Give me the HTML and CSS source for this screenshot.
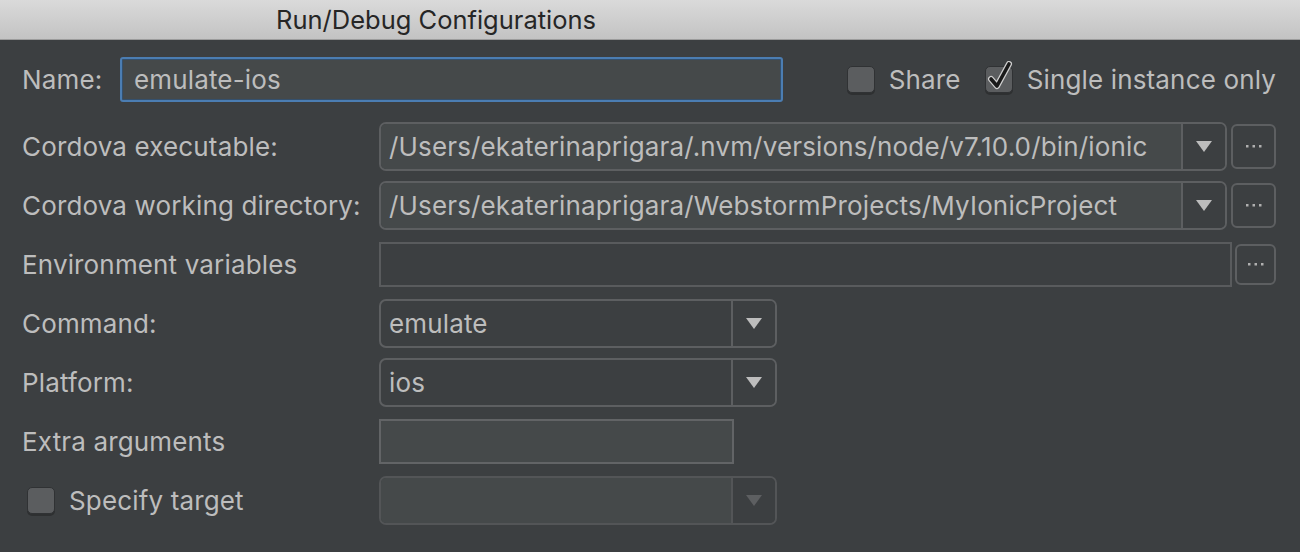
FILE: index.html
```html
<!DOCTYPE html>
<html>
<head>
<meta charset="utf-8">
<link rel="stylesheet" href="styles.css">
</head>
<body>
<div class="window">
  <div class="titlebar"><span class="title">Run/Debug Configurations</span></div>
  <div class="content">
    <div class="name-row">
      <span class="name-label">Name:</span>
      <div class="name-field">emulate-ios</div>
      <div class="checks">
        <div class="check"><span class="checkbox"></span><span>Share</span></div>
        <div class="check"><span class="checkbox"><svg class="tick" width="30" height="32" viewBox="0 0 30 32"><path d="M6 18 L12 25 L24 3" fill="none" stroke="#cfcfcf" stroke-width="6" stroke-linecap="round" stroke-linejoin="round"/><path d="M6 18 L12 25 L24 3" fill="none" stroke="#1a1a1a" stroke-width="3.6" stroke-linecap="round" stroke-linejoin="round"/></svg></span><span>Single instance only</span></div>
      </div>
    </div>

    <div class="form">
      <div class="row">
        <span class="label">Cordova executable:</span>
        <div class="ctrl">
          <div class="combo combo-wide editable">
            <div class="value">/Users/ekaterinaprigara/.nvm/versions/node/v7.10.0/bin/ionic</div>
            <div class="arrow"><svg width="16" height="11" viewBox="0 0 16 11"><polygon points="0,0 16,0 8,11" fill="#bdbdbd"/></svg></div>
          </div>
          <div class="more"><svg width="16" height="3" viewBox="0 0 16 3"><rect x="0" y="0" width="2.5" height="2.5" fill="#b0b0b0"/><rect x="6.5" y="0" width="2.5" height="2.5" fill="#b0b0b0"/><rect x="13" y="0" width="2.5" height="2.5" fill="#b0b0b0"/></svg></div>
        </div>
      </div>

      <div class="row">
        <span class="label">Cordova working directory:</span>
        <div class="ctrl">
          <div class="combo combo-wide editable">
            <div class="value">/Users/ekaterinaprigara/WebstormProjects/MyIonicProject</div>
            <div class="arrow"><svg width="16" height="11" viewBox="0 0 16 11"><polygon points="0,0 16,0 8,11" fill="#bdbdbd"/></svg></div>
          </div>
          <div class="more"><svg width="16" height="3" viewBox="0 0 16 3"><rect x="0" y="0" width="2.5" height="2.5" fill="#b0b0b0"/><rect x="6.5" y="0" width="2.5" height="2.5" fill="#b0b0b0"/><rect x="13" y="0" width="2.5" height="2.5" fill="#b0b0b0"/></svg></div>
        </div>
      </div>

      <div class="row">
        <span class="label">Environment variables</span>
        <div class="ctrl">
          <div class="env-field"></div>
          <div class="more more-small"><svg width="16" height="3" viewBox="0 0 16 3"><rect x="0" y="0" width="2.5" height="2.5" fill="#b0b0b0"/><rect x="6.5" y="0" width="2.5" height="2.5" fill="#b0b0b0"/><rect x="13" y="0" width="2.5" height="2.5" fill="#b0b0b0"/></svg></div>
        </div>
      </div>

      <div class="row">
        <span class="label">Command:</span>
        <div class="ctrl">
          <div class="combo combo-short">
            <div class="value">emulate</div>
            <div class="arrow"><svg width="16" height="11" viewBox="0 0 16 11"><polygon points="0,0 16,0 8,11" fill="#bdbdbd"/></svg></div>
          </div>
        </div>
      </div>

      <div class="row">
        <span class="label">Platform:</span>
        <div class="ctrl">
          <div class="combo combo-short">
            <div class="value">ios</div>
            <div class="arrow"><svg width="16" height="11" viewBox="0 0 16 11"><polygon points="0,0 16,0 8,11" fill="#bdbdbd"/></svg></div>
          </div>
        </div>
      </div>

      <div class="row">
        <span class="label">Extra arguments</span>
        <div class="ctrl">
          <div class="extra-field"></div>
        </div>
      </div>

      <div class="row">
        <span class="label check-label"><span class="checkbox"></span><span>Specify target</span></span>
        <div class="ctrl">
          <div class="combo combo-short disabled">
            <div class="value"></div>
            <div class="arrow"><svg width="16" height="11" viewBox="0 0 16 11"><polygon points="0,0 16,0 8,11" fill="#5d5f61"/></svg></div>
          </div>
        </div>
      </div>
    </div>
  </div>
</div>
</body>
</html>
```

FILE: styles.css
```css
html, body {
  margin: 0;
  padding: 0;
}

body {
  width: 1300px;
  height: 552px;
  overflow: hidden;
  background: #3c3f41;
  color: #bdbdbd;
  font-family: Inter, "Liberation Sans", "DejaVu Sans", sans-serif;
  font-size: 26px;
  letter-spacing: 0.15px;
}

.titlebar {
  height: 39px;
  border-bottom: 1px solid #9c9c9c;
  background: linear-gradient(#dadada, #c3c3c3);
  display: flex;
  align-items: center;
  padding-left: 276px;
  color: #262626;
  font-size: 25.5px;
  letter-spacing: 0;
}

.content {
  padding: 17px 24px 0 22px;
}

.name-row {
  display: flex;
  align-items: center;
  height: 45px;
}

.name-label {
  width: 98px;
  flex: none;
}

.name-field {
  width: 663px;
  height: 45px;
  box-sizing: border-box;
  flex: none;
  border: 2px solid #4b7db2;
  border-radius: 3px;
  box-shadow: inset 0 0 0 1px #34506d;
  background: #45494a;
  padding-left: 12px;
  display: flex;
  align-items: center;
}

.checks {
  margin-left: auto;
  display: flex;
  align-items: center;
  gap: 24px;
}

.check {
  display: flex;
  align-items: center;
  gap: 14px;
}

.checkbox {
  position: relative;
  display: inline-block;
  flex: none;
  width: 28px;
  height: 27px;
  box-sizing: border-box;
  border-radius: 5px;
  background: #5b5d5f;
  border: 1px solid #303234;
  box-shadow: 0 2px 0 #2e3031;
}

.tick {
  position: absolute;
  left: -1px;
  top: -6px;
}

.form {
  display: flex;
  flex-direction: column;
  gap: 11px;
  margin-top: 20px;
}

.row {
  display: grid;
  grid-template-columns: 357px 1fr;
  align-items: center;
  height: 48px;
}

.label {
  white-space: nowrap;
}

.check-label {
  display: flex;
  align-items: center;
  gap: 14px;
  padding-left: 5px;
}

.ctrl {
  display: flex;
  align-items: center;
}

.combo {
  height: 49px;
  box-sizing: border-box;
  border: 2px solid #5d5f61;
  border-radius: 7px;
  display: flex;
  overflow: hidden;
  flex: none;
}

.combo-wide {
  width: 848px;
}

.combo-short {
  width: 398px;
}

.combo .value {
  flex: 1;
  padding-left: 8px;
  display: flex;
  align-items: center;
  white-space: nowrap;
  overflow: hidden;
}

.combo.editable .value,
.combo.disabled .value {
  background: #45494a;
}

.combo .arrow {
  width: 42px;
  flex: none;
  border-left: 2px solid #5d5f61;
  background: #3c3f41;
  display: flex;
  align-items: center;
  justify-content: center;
}

.combo.disabled {
  border-color: #535557;
}

.combo.disabled .arrow {
  border-left-color: #535557;
}

.more {
  width: 45px;
  height: 45px;
  margin-left: 4px;
  box-sizing: border-box;
  border: 2px solid #5d5f61;
  border-radius: 6px;
  display: flex;
  align-items: center;
  justify-content: center;
  flex: none;
}

.more-small {
  width: 41px;
  height: 41px;
  margin-left: 3px;
}

.env-field {
  width: 853px;
  height: 45px;
  box-sizing: border-box;
  border: 2px solid #595b5d;
  background: #3c3f41;
  flex: none;
}

.extra-field {
  width: 355px;
  height: 45px;
  box-sizing: border-box;
  border: 2px solid #626466;
  background: #45494a;
  flex: none;
}
```
